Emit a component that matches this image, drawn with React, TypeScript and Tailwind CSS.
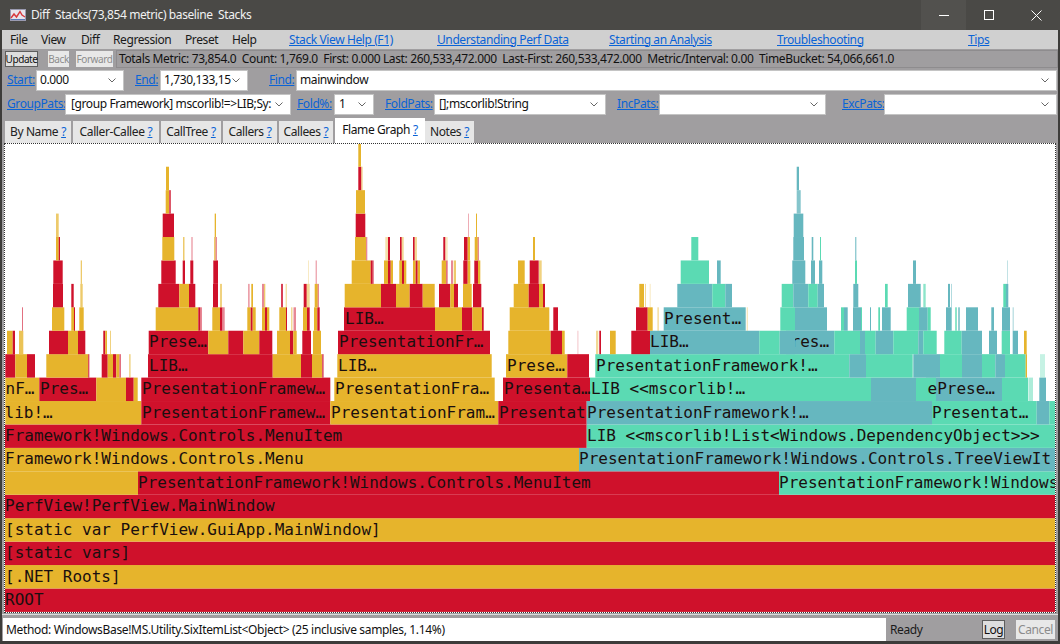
import React from "react";

type Cell = [number, number, string, number?, string?, number?];

const FILL: Record<string, string> = { r: "#cf112b", y: "#e6b42c", g: "#5bdab3", b: "#66b7bf" };

const LEVELS: Cell[][] = [
  [[5, 1055, "r", 1, "ROOT", 5]],
  [[5, 1055, "y", 1, "[.NET Roots]", 5]],
  [[5, 1055, "r", 1, "[static vars]", 5]],
  [[5, 1055, "y", 1, "[static var PerfView.GuiApp.MainWindow]", 5]],
  [[5, 1055, "r", 1, "PerfView!PerfView.MainWindow", 5]],
  [[5, 138, "y"], [138, 779, "r", 1, "PresentationFramework!Windows.Controls.MenuItem", 138], [779, 1055, "g", 1, "PresentationFramework!Windows", 779]],
  [[5, 579, "y", 1, "Framework!Windows.Controls.Menu", 5], [579, 1055, "b", 1, "PresentationFramework!Windows.Controls.TreeViewIt", 579]],
  [[5, 586.7, "r", 1, "Framework!Windows.Controls.MenuItem", 5], [586.7, 1055, "g", 1, "LIB <<mscorlib!List<Windows.DependencyObject>>>", 587]],
  [
    [5.3, 141.3, "y", 1, "lib!…", 4.5], [141.3, 330.3, "r", 1, "PresentationFramew…", 142], [330.3, 498.3, "y", 1, "PresentationFram…", 331],
    [498.3, 586.7, "r", 1, "Presentat", 499], [586.7, 932, "b", 1, "PresentationFramework!…", 587], [932, 1036.7, "g", 1, "Presentat…", 932],
    [1036.7, 1049.3, "b"], [1049.3, 1055, "g"],
  ],
  [
    [5.3, 39.3, "y", 1, "nF…", 5.5], [39.3, 96.3, "r", 1, "Pres…", 40], [96.3, 126, "y"], [126, 133.7, "r"], [133.7, 137.7, "y"],
    [141.3, 330.3, "r", 1, "PresentationFramew…", 142], [334.3, 494.7, "y", 1, "PresentationFra…", 335], [503, 590, "r", 1, "Presenta…", 504],
    [590, 871, "g", 1, "LIB <<mscorlib!…", 591], [871, 916, "b"], [916, 936, "g"], [936, 1002, "b"], [926, 936, "g", 1, "ePrese…", 927.5],
    [1002, 1028.3, "g"], [1029, 1033, "g", 0.5], [1039.3, 1046, "b"],
  ],
  [
    [5.3, 15.3, "r"], [15.3, 27, "y"], [27, 35, "r"], [46.3, 88.3, "y"], [88.3, 89.3, "r"], [101.7, 107.7, "r"], [107.7, 113, "y"], [113, 116.3, "r"],
    [116.3, 119.3, "y"], [119.3, 121, "r", 0.6], [129, 130.7, "y", 0.5], [148, 272.7, "r", 1, "LIB…", 149], [272.7, 301, "y"], [301, 312, "r"], [312, 322, "y"],
    [322, 323.7, "r", 0.7], [337.3, 491.7, "y", 1, "LIB…", 338], [506, 567.3, "y", 1, "Prese…", 507], [567.3, 589, "r"], [595.3, 849.3, "g", 1, "PresentationFramework!…", 596],
    [849.3, 866, "b"], [866, 912.7, "g"], [913.3, 940, "b"], [940, 962, "g"], [962, 982, "b"], [982, 995.3, "g"], [995.3, 1005, "b"], [1005, 1025.7, "g"], [1025.7, 1027, "y"], [1040, 1045, "g", 0.35],
  ],
  [
    [7, 12.7, "y"], [12.7, 15, "r"], [19, 23.3, "y", 0.8], [49, 68, "r"], [68, 78, "y"], [78, 85.3, "r"], [103.3, 105.3, "r"], [105.3, 107, "y"], [110, 111, "y", 0.6],
    [148.7, 208.3, "r", 1, "Prese…", 149], [208.3, 228.3, "y"], [228.3, 243.3, "r"], [243.3, 259.3, "y"], [259.3, 272.3, "r"], [277, 290, "y"], [290, 293.3, "r"], [293.3, 296.7, "y"],
    [302.3, 311, "r"], [313, 321, "y"], [338, 490, "r", 1, "PresentationFr…", 339], [508.3, 550.7, "y"], [550.7, 562, "r"], [562, 564.7, "y"], [577, 578.7, "r", 0.15],
    [596, 598.3, "y", 0.5], [599.3, 601, "r"], [610, 615.7, "y"], [631.3, 650, "r"], [650, 759.3, "b", 1, "LIB…", 650], [759.3, 779.7, "g"], [779.7, 834.3, "b", 1, "res…", 790.5],
    [834.3, 860, "g"], [860, 865, "b"], [865, 875.7, "g"], [875.7, 893.3, "b"], [893.3, 918.3, "g"], [918.3, 923.3, "b"], [923.3, 936.7, "g"], [944.3, 961.7, "g"], [961.7, 982, "b"],
    [989, 997, "b"], [1001.7, 1010, "g"], [1012.7, 1018, "b"], [1024, 1026.7, "y"],
  ],
  [
    [22, 23, "r", 0.6], [52, 64.3, "y"], [71.3, 74.3, "y"], [74, 75, "r"], [79.3, 83.7, "y"], [155.7, 198.3, "y"], [198.3, 200.3, "r"], [200.3, 202, "r", 0.5],
    [212.3, 220, "y"], [220, 222.3, "r"], [222.3, 224.7, "r", 0.5], [247.3, 250.7, "y"], [250.7, 252.7, "r"], [252.7, 255.7, "y"], [262, 265, "y"], [265, 267, "r"], [267, 269.3, "y"],
    [279.3, 286, "y"], [286, 287, "r"], [291, 292.5, "y", 0.5], [293.5, 296, "r", 0.5], [303, 307, "y"], [307, 309.7, "r"], [314, 317.3, "y"], [317.3, 319.7, "r"], [344, 435, "r", 1, "LIB…", 345],
    [435, 462, "y"], [462, 472.3, "r"], [472.3, 482, "y"], [482, 483.7, "r"], [509.7, 549.3, "y"], [553.3, 558, "r"], [636, 647.7, "r"], [647.7, 652.7, "y"], [657.3, 659, "y", 0.4],
    [663.7, 745.7, "b", 1, "Present…", 664], [746.7, 748, "y", 0.3], [780.3, 795, "g"], [795, 827, "b"], [841, 844, "g"], [844, 847.7, "b"], [853, 861, "b"], [861, 862, "g"], [870, 871, "b"],
    [878.3, 880, "g"], [882, 890.7, "b"], [906.7, 919, "g"], [919, 927.7, "b"], [927.7, 930.7, "g"], [946, 951.7, "b"], [955, 957, "g", 0.7], [958, 960, "b", 0.7], [966, 978, "b"], [991.3, 994, "b"], [1002, 1010, "b"], [1012.5, 1014, "b", 0.4],
  ],
  [
    [53, 63, "r"], [71.3, 73.7, "r"], [80.3, 82.7, "y", 0.7], [158.3, 179.3, "r"], [179.3, 189, "y"], [189, 195.3, "r"], [213, 218, "r"], [220, 222, "y", 0.6], [248, 249.7, "r", 0.4], [251.3, 253, "y"],
    [262, 264, "r", 0.5], [264, 265.3, "y", 0.7], [281, 283, "r", 0.8], [285.7, 286.7, "y", 0.6], [303.7, 306.7, "r"], [306.7, 309.7, "y", 0.5], [314.7, 317.7, "y"], [317.7, 319, "r", 0.5],
    [344.7, 381, "y"], [381, 396, "r"], [396, 409.7, "y"], [409.7, 422.7, "r"], [422.7, 434.7, "y"], [439, 450.3, "r"], [450.3, 454, "y"], [454, 458, "r"], [463, 471.7, "y"], [473, 481.3, "r"],
    [513.7, 528.7, "y"], [528.7, 539, "r"], [539, 543, "y"], [543, 545, "r"], [639.3, 644, "y"], [645, 646, "y", 0.5], [649.5, 651, "y", 0.2], [677.3, 712.3, "b"], [712.3, 725.3, "g"], [725.3, 732, "b"],
    [781.7, 793.3, "g"], [793.3, 808.3, "b"], [808.3, 817.7, "g"], [817.7, 824, "b"], [853.3, 858.3, "b"], [885, 887.7, "g"], [908, 920.7, "b"], [923.3, 925.7, "g", 0.7], [948, 950, "b"], [951, 952, "b", 0.5], [1003.3, 1006, "g"], [1006, 1008.3, "b"],
  ],
  [
    [53.3, 62.7, "r"], [80.7, 82, "y", 0.7], [161.3, 175.7, "r"], [182.7, 185, "r"], [190.3, 193.3, "r"], [213.3, 218, "r"], [308.3, 309, "y", 0.4], [315.7, 316.7, "r", 0.5],
    [351.7, 370.7, "y"], [370.7, 372.7, "r"], [372.7, 374, "r", 0.5], [384, 388, "y"], [388, 390.7, "r"], [390.7, 393, "y"], [399.3, 402, "y"], [402, 404, "r"], [404, 406.3, "y"], [413, 415.7, "y"], [415.7, 417.7, "r"], [417.7, 420, "y"],
    [441.7, 446, "y"], [446, 447.7, "r", 0.6], [451, 453, "r", 0.5], [453.7, 456, "y", 0.7], [463.3, 467.7, "r"], [467.7, 470.3, "y"], [474.3, 478, "r"], [478, 480.3, "y"], [518, 524.7, "y"], [529.7, 538.7, "r"], [539, 541.7, "y", 0.6],
    [680.7, 709, "g"], [717, 720.7, "b"], [792.3, 805.3, "b"], [811, 815, "b"], [819, 822.3, "b"], [855, 857, "g"], [913, 916, "b"], [1007, 1008, "b", 0.4],
  ],
  [
    [56, 58.7, "y"], [58.7, 60, "r"], [162.3, 174.3, "y"], [183, 184.5, "y", 0.7], [191.3, 192.7, "r", 0.4], [214, 215.7, "y", 0.7], [215.7, 216.7, "r", 0.7], [355, 366, "y"], [366, 367.3, "r", 0.5],
    [385.3, 388, "y", 0.4], [388, 390, "r"], [400, 401.7, "r"], [401.7, 403.7, "y", 0.5], [413, 414.7, "r"], [414.7, 417, "y", 0.5], [443.3, 445.3, "r"], [445.3, 447.7, "y", 0.3],
    [464, 467.7, "r"], [467.7, 470, "y"], [474.7, 477.7, "y"], [477.7, 479, "r", 0.5], [533, 535, "y"], [691.3, 698.3, "g"], [793.3, 804, "b"], [811.7, 813.3, "b"], [820, 821, "g"], [855.3, 856.3, "b"],
  ],
  [[56, 58.7, "y", 0.7], [162.7, 174, "r"], [214.7, 216, "y"], [355.7, 365.3, "r"], [468.3, 469, "r", 0.5], [476, 477, "y"], [793.7, 803.3, "b"]],
  [[165.7, 169, "y"], [169, 171, "r", 0.7], [356, 365, "y"], [796.7, 800.7, "b", 0.8]],
  [[166, 169, "y"], [358.3, 361.3, "r"], [361.3, 362.7, "y", 0.5], [796.7, 799, "b"]],
  [[358.3, 361, "y"]],
];

const ROW = 23.43;
const BOTTOM = 611.9;

function FlameGraph() {
  return (
    <svg width={1050} height={468} viewBox="5 144 1050 468" className="block">
      {LEVELS.map((cells, lv) => {
        const top = BOTTOM - ROW * (lv + 1);
        return (
          <g key={lv}>
            {cells.map((c, i) => (
              <rect key={i} x={c[0]} y={top} width={c[1] - c[0]} height={ROW} fill={FILL[c[2]]} fillOpacity={c[3] ?? 1} />
            ))}
            {cells.map((c, i) =>
              c[4] ? (
                <text
                  key={i}
                  x={c[5]}
                  y={top + 16.6}
                  fill="#1a0f0f"
                  fontSize={16}
                  letterSpacing={0}
                  style={{ fontFamily: '"DejaVu Sans Mono", monospace' }}
                >
                  {c[4]}
                </text>
              ) : null
            )}
          </g>
        );
      })}
      <rect x={786} y={BOTTOM - ROW * 12} width={9} height={ROW} fill={FILL.b} />
    </svg>
  );
}

function Chevron() {
  return (
    <svg width="8" height="5" viewBox="0 0 8 5" className="shrink-0">
      <path d="M0.5 0.5 L4 4 L7.5 0.5" fill="none" stroke="#666" strokeWidth="1" />
    </svg>
  );
}

function Combo({ w, text, pad }: { w: string; text?: string; pad?: string }) {
  return (
    <div className={`${w} ${pad ?? "pl-[3px]"} h-[21px] shrink-0 bg-white border border-[#c4c4c4] flex items-center pr-[7px] text-[#111]`}>
      <span className="flex-1 overflow-hidden whitespace-nowrap leading-[18px]">{text}</span>
      <Chevron />
    </div>
  );
}

function Lnk({ children, w }: { children: React.ReactNode; w: string }) {
  return <a className={`${w} shrink-0 text-[#0a63d6] underline whitespace-nowrap`}>{children}</a>;
}

function Tab({ label, w, active }: { label: string; w: string; active?: boolean }) {
  return (
    <div
      className={
        active
          ? `${w} h-[25px] shrink-0 bg-white flex items-center justify-center gap-[3px] pb-[2px] text-[#111]`
          : `${w} h-[22px] mt-[3px] mr-[2px] shrink-0 bg-[#e6e6e6] flex items-center justify-center gap-[3px] text-[#222]`
      }
    >
      <span>{label}</span>
      <span className="text-[#0a63d6] underline">?</span>
    </div>
  );
}

export default function App() {
  return (
    <div
      className="w-[1060px] h-[644px] overflow-hidden bg-[#3d3c3a] pl-[2px] pr-[2px] flex flex-col text-[12px] leading-none tracking-[-0.4px]"
      style={{ fontFamily: '"Noto Sans", sans-serif' }}
    >
      {/* Title bar */}
      <div className="h-[30px] shrink-0 -mx-[2px] bg-[#4a4946] flex items-center text-[#f1f1f1]">
        <svg width="16" height="12" viewBox="0 0 16 12" className="ml-[10px] mr-[5px] shrink-0">
          <rect x="0.5" y="0.5" width="15" height="11" fill="#e8e4ec" stroke="#9a9ab0" />
          <path d="M1 9 L4 5 L6.5 8 L10 2.5 L12 6 L15 8" fill="none" stroke="#d8383c" strokeWidth="1.4" />
          <path d="M1 10.5 L15 10.5" stroke="#5a7ab8" strokeWidth="1" />
        </svg>
        <span className="whitespace-pre text-[12px]">Diff  Stacks(73,854 metric) baseline  Stacks</span>
        <div className="ml-auto flex h-full">
          <div className="w-[45px] h-full bg-[#52514e] flex items-center justify-center">
            <svg width="10" height="10" viewBox="0 0 10 10"><path d="M0 5.5H10" stroke="#fff" /></svg>
          </div>
          <div className="w-[46px] h-full flex items-center justify-center">
            <svg width="10" height="10" viewBox="0 0 10 10"><rect x="0.5" y="0.5" width="9" height="9" fill="none" stroke="#fff" /></svg>
          </div>
          <div className="w-[48px] h-full flex items-center justify-center">
            <svg width="11" height="11" viewBox="0 0 11 11"><path d="M0.5 0.5L10.5 10.5M10.5 0.5L0.5 10.5" stroke="#fff" /></svg>
          </div>
        </div>
      </div>

      {/* Menu */}
      <div className="h-[19px] shrink-0 bg-[#d0d0d0] flex items-center pl-[8px] text-[#1a1a1a]">
        <span className="w-[31px] shrink-0">File</span>
        <span className="w-[40px] shrink-0">View</span>
        <span className="w-[32px] shrink-0">Diff</span>
        <span className="w-[72px] shrink-0">Regression</span>
        <span className="w-[47px] shrink-0">Preset</span>
        <span className="w-[57px] shrink-0">Help</span>
        <Lnk w="w-[148px]">Stack View Help (F1)</Lnk>
        <Lnk w="w-[172px]">Understanding Perf Data</Lnk>
        <Lnk w="w-[168px]">Starting an Analysis</Lnk>
        <Lnk w="w-[191px]">Troubleshooting</Lnk>
        <Lnk w="w-[30px]">Tips</Lnk>
      </div>

      {/* Window body */}
      <div className="flex-1 min-h-0 bg-[#a09ea0] flex flex-col">
        {/* Toolbar */}
        <div className="h-[19px] shrink-0 flex items-center pl-[3px]">
          <div className="w-[33px] h-[16px] shrink-0 bg-[#dedede] border border-[#5e5e5e] flex items-center justify-center text-[10px] text-[#111]">Update</div>
          <div className="w-[21px] h-[16px] ml-[10px] shrink-0 bg-[#e8e8e8] flex items-center justify-center text-[10px] text-[#8c8c8c]">Back</div>
          <div className="w-[37px] h-[16px] ml-[7px] shrink-0 bg-[#e8e8e8] flex items-center justify-center text-[10px] text-[#8c8c8c]">Forward</div>
          <div className="flex-1 h-[18px] ml-[3px] border border-[#8e8c8e] flex items-center pl-[2px] text-[#111] whitespace-pre tracking-[-0.37px]">
            Totals Metric: 73,854.0  Count: 1,769.0  First: 0.000 Last: 260,533,472.000  Last-First: 260,533,472.000  Metric/Interval: 0.00  TimeBucket: 54,066,661.0
          </div>
        </div>

        {/* Start / End / Find */}
        <div className="h-[24px] shrink-0 flex items-center pl-[5px]">
          <Lnk w="w-[29px]">Start:</Lnk>
          <Combo w="w-[88px]" text="0.000" />
          <div className="w-[11px] shrink-0" />
          <Lnk w="w-[25px]">End:</Lnk>
          <Combo w="w-[88px]" text="1,730,133,15" />
          <div className="w-[21px] shrink-0" />
          <Lnk w="w-[27px]">Find:</Lnk>
          <Combo w="w-[761px]" text="mainwindow" />
        </div>

        {/* Pats */}
        <div className="h-[24px] shrink-0 flex items-center pl-[5px]">
          <Lnk w="w-[58px]">GroupPats:</Lnk>
          <Combo w="w-[226px]" pad="pl-[5px]" text="[group Framework] mscorlib!=>LIB;Sy:" />
          <div className="w-[6px] shrink-0" />
          <Lnk w="w-[37px]">Fold%:</Lnk>
          <Combo w="w-[40px]" pad="pl-[4px]" text="1" />
          <div className="w-[11px] shrink-0" />
          <Lnk w="w-[49px]">FoldPats:</Lnk>
          <Combo w="w-[172px]" pad="pl-[4px]" text="[];mscorlib!String" />
          <div className="w-[11px] shrink-0" />
          <Lnk w="w-[42px]">IncPats:</Lnk>
          <Combo w="w-[167px]" />
          <div className="w-[16px] shrink-0" />
          <Lnk w="w-[42px]">ExcPats:</Lnk>
          <Combo w="w-[173px]" />
        </div>

        {/* Tabs */}
        <div className="h-[27px] shrink-0 flex items-start pl-[3px] pt-[2px]">
          <Tab label="By Name" w="w-[66px]" />
          <Tab label="Caller-Callee" w="w-[86px]" />
          <Tab label="CallTree" w="w-[60px]" />
          <Tab label="Callers" w="w-[54px]" />
          <Tab label="Callees" w="w-[54px]" />
          <Tab label="Flame Graph" w="w-[90px]" active />
          <Tab label="Notes" w="w-[49px]" />
        </div>

        {/* Flame graph frame */}
        <div className="h-[470px] shrink-0 mx-[2px] bg-white border border-dotted border-[#333] overflow-hidden">
          <FlameGraph />
        </div>

        {/* Status */}
        <div className="h-[1px] shrink-0 mt-[1px] bg-[#dcdcdc]" />
        <div className="h-[3px] shrink-0" />
        <div className="h-[23px] shrink-0 flex items-stretch">
          <div className="w-[883px] shrink-0 bg-white ml-[1px] flex items-center pl-[3px] text-[#111] whitespace-pre leading-[18px] tracking-[-0.34px]">
            {"Method: WindowsBase!MS.Utility.SixItemList<Object> (25 inclusive samples, 1.14%)"}
          </div>
          <div className="w-[96px] shrink-0 pl-[4px] flex items-center text-[#1a1a1a]">Ready</div>
          <div className="w-[23px] h-[19px] my-[2px] shrink-0 bg-[#dedede] border border-[#5e5e5e] flex items-center justify-center text-[#111]">Log</div>
          <div className="w-[39px] h-[19px] my-[2px] ml-[11px] shrink-0 bg-[#e8e8e8] flex items-center justify-center text-[#8c8c8c]">Cancel</div>
        </div>
        <div className="flex-1 bg-[#3d3c3a] -mx-[2px]" />
      </div>
    </div>
  );
}
